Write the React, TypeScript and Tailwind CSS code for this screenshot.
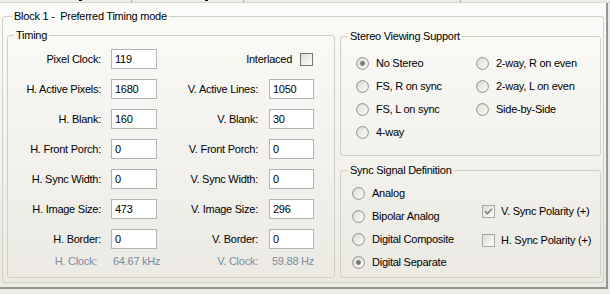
import React from 'react';

type Row = [string, string, string | null, string | null];

const timingRows: Row[] = [
  ['H. Active Pixels:', '1680', 'V. Active Lines:', '1050'],
  ['H. Blank:', '160', 'V. Blank:', '30'],
  ['H. Front Porch:', '0', 'V. Front Porch:', '0'],
  ['H. Sync Width:', '0', 'V. Sync Width:', '0'],
  ['H. Image Size:', '473', 'V. Image Size:', '296'],
  ['H. Border:', '0', 'V. Border:', '0'],
];

function Field({ value, wide }: { value: string; wide?: boolean }) {
  return (
    <div
      className={`h-[20px] border border-[#b4b4b4] bg-white pl-[3px] leading-[18px] ${
        wide ? 'w-[46px]' : 'w-[45px]'
      }`}
    >
      {value}
    </div>
  );
}

function Radio({ checked }: { checked?: boolean }) {
  return (
    <svg width="13" height="13" viewBox="0 0 13 13" className="shrink-0">
      <defs>
        <linearGradient id="rg" x1="0" y1="0" x2="1" y2="1">
          <stop offset="0" stopColor="#dcd9d2" />
          <stop offset="1" stopColor="#ffffff" />
        </linearGradient>
      </defs>
      <circle cx="6.5" cy="6.5" r="5.9" fill="url(#rg)" stroke="#8f8f8c" strokeWidth="1" />
      {checked && <circle cx="6.5" cy="6.5" r="2.4" fill="#767674" />}
    </svg>
  );
}

function Check({ checked, dark }: { checked?: boolean; dark?: boolean }) {
  return (
    <svg width="13" height="13" viewBox="0 0 13 13" className="shrink-0">
      <defs>
        <linearGradient id="cg" x1="0" y1="0" x2="1" y2="1">
          <stop offset="0" stopColor="#dddbd4" />
          <stop offset="1" stopColor="#ffffff" />
        </linearGradient>
      </defs>
      <rect x="0.5" y="0.5" width="12" height="12" fill="url(#cg)" stroke={dark ? '#77756f' : '#a8a8a4'} />
      {checked && (
        <polyline points="3,6.2 5.3,8.6 10,3.8" fill="none" stroke="#8c8c8a" strokeWidth="1.8" />
      )}
    </svg>
  );
}

function RadioItem({ label, checked }: { label: string; checked?: boolean }) {
  return (
    <div className="flex h-[16px] items-center gap-[7px] whitespace-nowrap">
      <Radio checked={checked} />
      <span>{label}</span>
    </div>
  );
}

export default function App() {
  return (
    <div className="h-[294px] w-[610px] overflow-hidden bg-[#ecebe5] font-['Liberation_Sans',Arial,sans-serif] text-[11px] leading-[13px] tracking-[-0.25px] text-black">
      {/* tab strip remnants */}
      <div className="flex h-[3px] border-b border-[#d8d7d0] bg-[#edece7]">
        <div className="flex w-[132px] border-r border-[#a9a8a2]">
          <div className="ml-[79px] h-[1px] w-[3px] bg-black" />
        </div>
        <div className="flex w-[112px] border-r border-[#a9a8a2]">
          <div className="ml-[73px] h-[1px] w-[3px] bg-black" />
        </div>
        <div className="w-[217px] border-r border-[#a9a8a2]" />
      </div>

      <div className="h-[286px] w-[608px] border-r-2 border-b-2 border-[#939796] bg-gradient-to-b from-[#fbfbf9] to-[#ebe9e2] pt-[7px] pl-[2px]">
        <fieldset className="h-[273px] w-[602px] rounded-[3px] border border-[#d0d0bf] pr-[2px] pl-[4px]">
          <legend className="ml-[5px] px-[2px] leading-[13px] whitespace-pre">Block 1 -  Preferred Timing mode</legend>

          <div className="flex gap-[5px] pt-[6px]">
            {/* Timing */}
            <fieldset className="h-[249px] w-[328px] rounded-[3px] border border-[#d0d0bf]">
              <legend className="ml-[6px] px-[2px] leading-[13px]">Timing</legend>
              <div className="flex flex-col gap-[10px] pt-[7px]">
                <div className="flex h-[20px] items-center">
                  <div className="w-[93px] text-right">Pixel Clock:</div>
                  <div className="ml-[10px]">
                    <Field value="119" wide />
                  </div>
                  <div className="flex w-[157px] items-center justify-end gap-[8px] pr-[1px]">
                    <span>Interlaced</span>
                    <Check dark />
                  </div>
                </div>
                {timingRows.map(([l1, v1, l2, v2]) => (
                  <div key={l1} className="flex h-[20px] items-center">
                    <div className="w-[93px] text-right whitespace-nowrap">{l1}</div>
                    <div className="ml-[10px]">
                      <Field value={v1} wide />
                    </div>
                    <div className="w-[101px] text-right whitespace-nowrap">{l2}</div>
                    <div className="ml-[11px]">
                      <Field value={v2 ?? ''} />
                    </div>
                  </div>
                ))}
              </div>
              <div className="mt-[6px] flex h-[13px] items-center whitespace-nowrap text-[#7a8ba3]">
                <div className="w-[93px] pr-[4px] text-right">H. Clock:</div>
                <div className="ml-[10px] w-[46px] pl-[2px]">64.67 kHz</div>
                <div className="w-[101px] text-right">V. Clock:</div>
                <div className="ml-[11px] pl-[3px]">59.88 Hz</div>
              </div>
            </fieldset>

            <div className="mt-[1px] flex flex-col gap-[8px]">
              {/* Stereo */}
              <fieldset className="h-[126px] w-[261px] rounded-[3px] border border-[#d0d0bf]">
                <legend className="ml-[7px] px-[2px] leading-[13px]">Stereo Viewing Support</legend>
                <div className="grid grid-cols-[120px_1fr] gap-y-[7px] pt-[12px] pl-[15px]">
                  <RadioItem label="No Stereo" checked />
                  <RadioItem label="2-way, R on even" />
                  <RadioItem label="FS, R on sync" />
                  <RadioItem label="2-way, L on even" />
                  <RadioItem label="FS, L on sync" />
                  <RadioItem label="Side-by-Side" />
                  <RadioItem label="4-way" />
                </div>
              </fieldset>

              {/* Sync */}
              <fieldset className="h-[114px] w-[261px] rounded-[3px] border border-[#d0d0bf]">
                <legend className="ml-[7px] px-[2px] leading-[13px]">Sync Signal Definition</legend>
                <div className="flex pt-[8px] pl-[11px]">
                  <div className="flex w-[130px] flex-col gap-[7px]">
                    <RadioItem label="Analog" />
                    <RadioItem label="Bipolar Analog" />
                    <RadioItem label="Digital Composite" />
                    <RadioItem label="Digital Separate" checked />
                  </div>
                  <div className="flex flex-col gap-[13px] pt-[18px]">
                    <div className="flex h-[16px] items-center gap-[6px] whitespace-nowrap">
                      <Check checked />
                      <span>V. Sync Polarity (+)</span>
                    </div>
                    <div className="flex h-[16px] items-center gap-[6px] whitespace-nowrap">
                      <Check />
                      <span>H. Sync Polarity (+)</span>
                    </div>
                  </div>
                </div>
              </fieldset>
            </div>
          </div>
        </fieldset>
      </div>
    </div>
  );
}
